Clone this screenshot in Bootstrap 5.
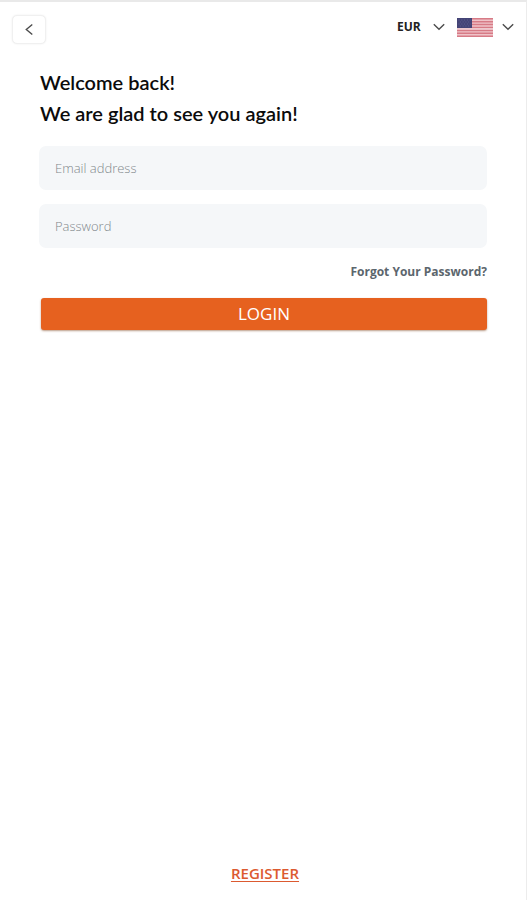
<!DOCTYPE html>
<html lang="en">
<head>
<meta charset="utf-8">
<meta name="viewport" content="width=device-width, initial-scale=1">
<title>Login</title>
<link href="https://cdn.jsdelivr.net/npm/bootstrap@5.3.0/dist/css/bootstrap.min.css" rel="stylesheet">
<style>
  body { font-family: "Open Sans", sans-serif; background: #fff; border-top: 2px solid #e9e9e9; border-right: 1px solid #ececec; }
  .top-bar { padding: 13px 12px 0; }
  .back-btn { width: 34px; height: 29px; background: #fff; border: 1px solid #f0f0f0; border-radius: 5px; box-shadow: 0 0 2px rgba(0,0,0,.08); }
  .top-tools { height: 24px; }
  .currency-select { appearance: none; border: 0; background: transparent; color: #222; font-size: 12px; font-weight: 700; width: 48px; padding: 0; }
  .currency-wrap { display: grid; align-items: center; }
  .currency-wrap > * { grid-area: 1 / 1; }
  .currency-wrap svg { justify-self: end; pointer-events: none; }
  .lang-btn { gap: 9px; }
  .login-area { padding: 23px 39px 0 39px; }
  .welcome { font-family: Lato, sans-serif; font-size: 20px; line-height: 31px; font-weight: 600; color: #0b0b0b; padding-left: 1px; }
  .login-input, .login-input:focus { height: 44px; background: #f5f7f9; border: 0; border-radius: 7px; padding: 0 16px; font-size: 13px; color: #444; }
  .login-input::placeholder { color: #81878b; font-weight: 300; opacity: 1; }
  .field-list { gap: 14px; margin-top: 17px; }
  .forgot { font-size: 12px; line-height: 18px; font-weight: 700; color: #5c666d; margin-top: 15px; }
  .login-btn, .login-btn:hover { background: #e6611f; color: #fff; border: 0; border-radius: 3px; height: 32px; font-size: 17px; line-height: 32px; margin-top: 17px; box-shadow: 0 1px 2px rgba(120,60,20,.5); }
  .login-wrap { padding-left: 2px; }
  .register, .register:hover { font-size: 15px; line-height: 20px; font-weight: 600; color: #dc5a30; text-underline-offset: 2px; }
  .page-foot { padding-bottom: 15px; padding-left: 4px; }
</style>
</head>
<body class="d-flex flex-column min-vh-100">
<header class="top-bar d-flex justify-content-between align-items-start">
  <button type="button" class="back-btn d-flex align-items-center justify-content-center p-0" aria-label="Back">
    <svg width="9" height="13" viewBox="0 0 9 13" fill="none" stroke="#4c4c4c" stroke-width="1.4"><path d="M7.3 1.5 1.3 6.5l6 5"/></svg>
  </button>
  <div class="top-tools d-flex align-items-center gap-2">
    <div class="currency-wrap me-1">
      <select class="currency-select" aria-label="Currency"><option>EUR</option><option>USD</option></select>
      <svg width="12" height="8" viewBox="0 0 12 8" fill="none" stroke="#4c4c4c" stroke-width="1.4"><path d="m.8 1.2 5.2 5 5.2-5"/></svg>
    </div>
    <button type="button" class="lang-btn btn border-0 p-0 d-flex align-items-center" aria-label="Language: English (US)">
      <svg width="36" height="19" viewBox="0 0 36 19">
        <path fill="#efc3c8" d="M0 0h36v19H0z"/>
        <path fill="#f7ecee" d="M0 10.2h36v1.4H0z"/>
        <path stroke="#d77b86" stroke-width="1.5" d="M0 .75h36M0 3.7h36M0 6.6h36M0 9.5h36M0 12.4h36M0 15.3h36M0 18.2h36"/>
        <path fill="#444476" d="M0 0h15v10H0z"/>
        <path stroke="#66669a" stroke-width=".8" stroke-dasharray="1 1.8" d="M1.5 2h12M2.8 4h10M1.5 6h12M2.8 8h10"/>
      </svg>
      <svg width="12" height="8" viewBox="0 0 12 8" fill="none" stroke="#4c4c4c" stroke-width="1.4"><path d="m.8 1.2 5.2 5 5.2-5"/></svg>
    </button>
  </div>
</header>
<main class="login-area flex-grow-1">
  <h1 class="welcome mb-0">Welcome back!<br>We are glad to see you again!</h1>
  <form>
    <div class="field-list d-flex flex-column">
      <input type="email" class="form-control login-input" placeholder="Email address" aria-label="Email address">
      <input type="password" class="form-control login-input" placeholder="Password" aria-label="Password">
    </div>
    <div class="d-flex justify-content-end"><a href="#" class="forgot text-decoration-none">Forgot Your Password?</a></div>
    <div class="login-wrap"><button type="submit" class="btn login-btn w-100 p-0">LOGIN</button></div>
  </form>
</main>
<footer class="page-foot text-center"><a href="#" class="register">REGISTER</a></footer>
<script src="https://cdn.jsdelivr.net/npm/bootstrap@5.3.0/dist/js/bootstrap.bundle.min.js"></script>
</body>
</html>
